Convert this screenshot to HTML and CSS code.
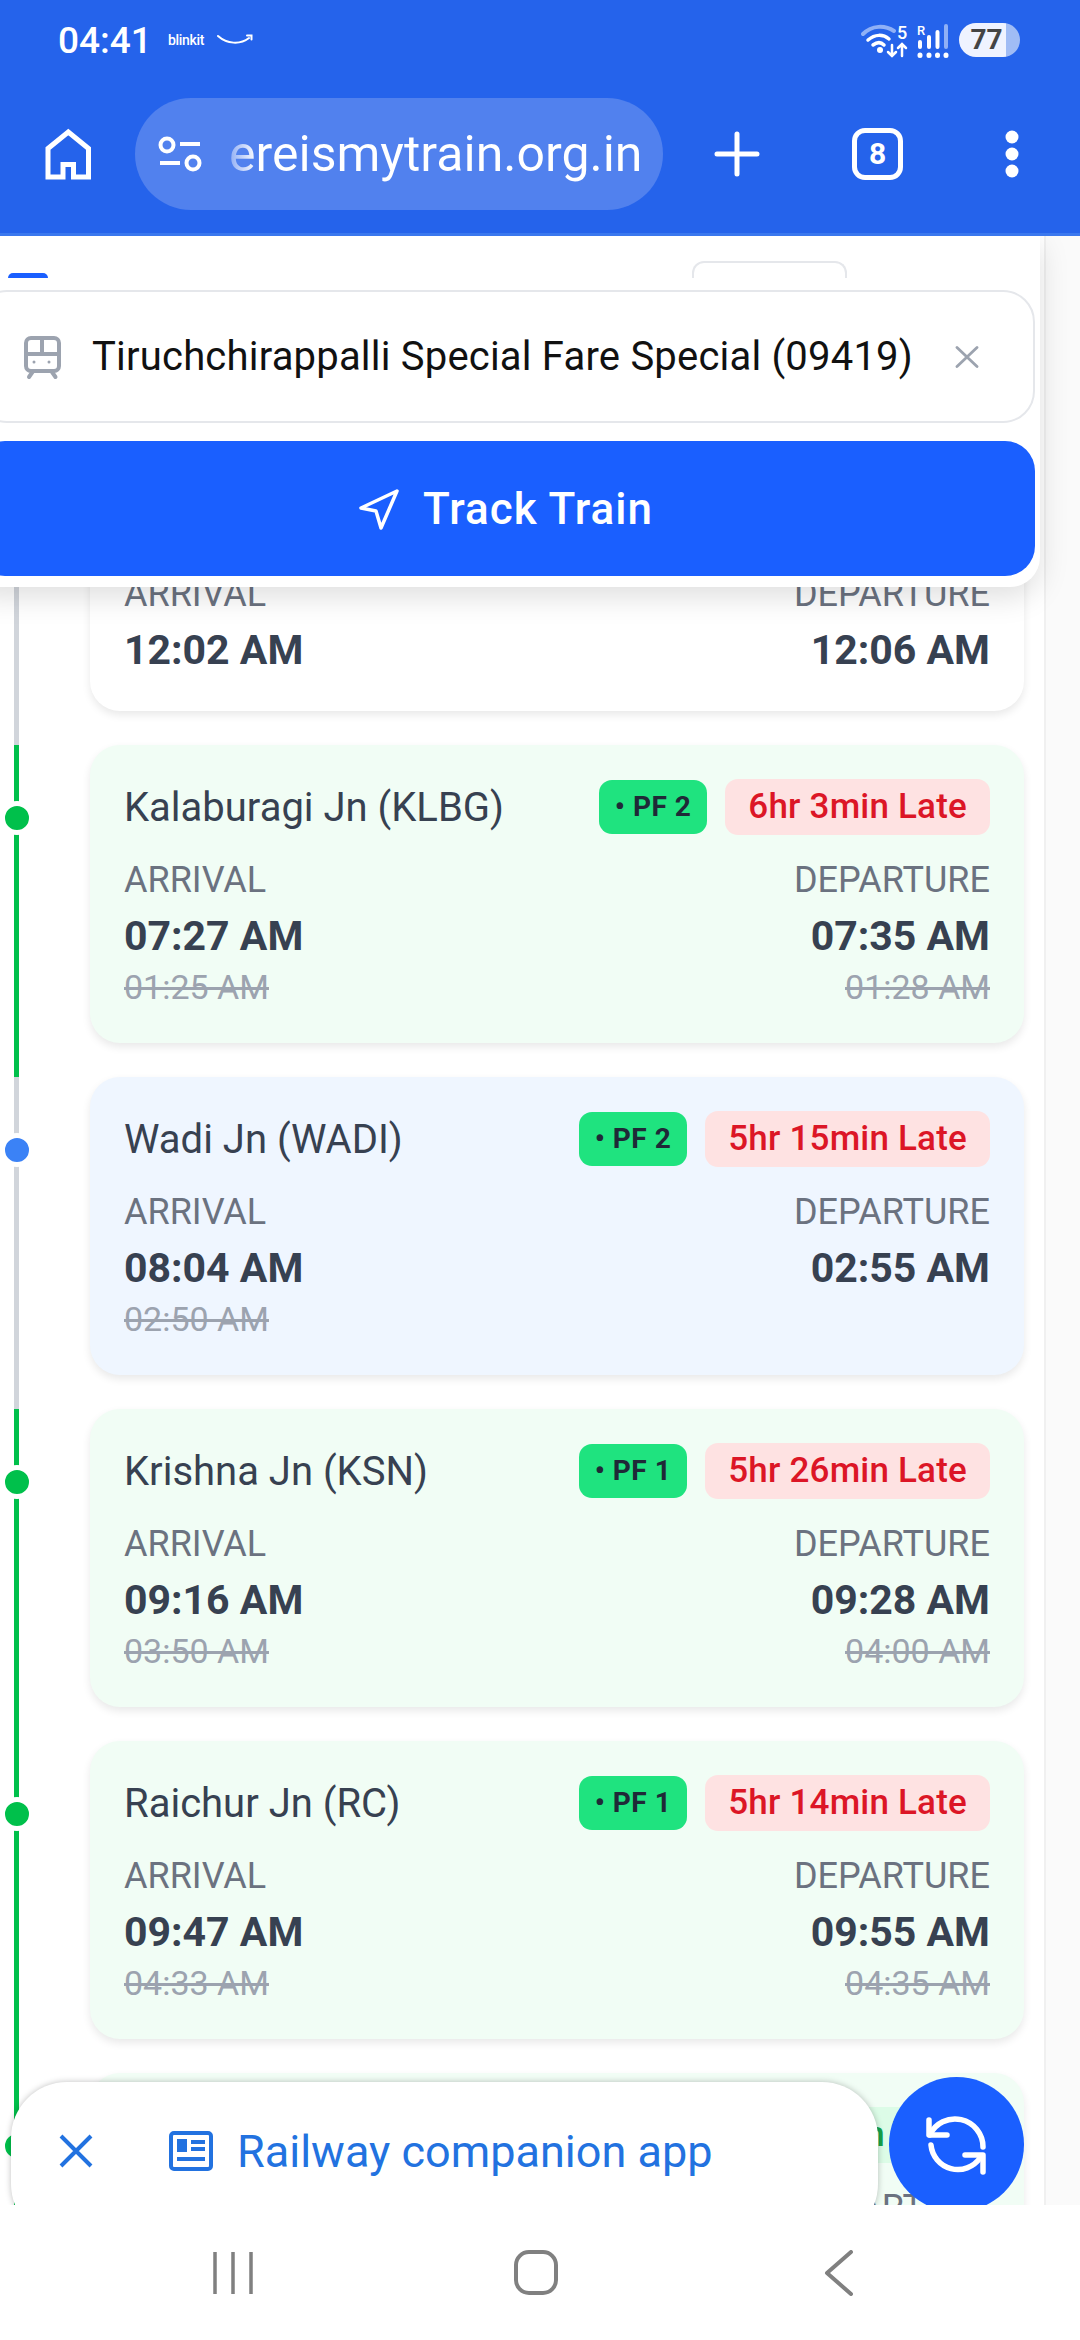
FILE: index.html
```html
<!DOCTYPE html>
<html lang="en">
<head>
    <meta charset="UTF-8">
    <meta name="viewport" content="width=device-width, initial-scale=1.0">
    <title>Train Running Status</title>
    <link rel="stylesheet" href="styles.css">
</head>
<body>

<header class="browser">
    <div class="status-bar">
        <span class="clock">04:41</span>
        <span class="notif-text">blinkit</span>
        <svg class="smile" viewBox="0 0 36 12" fill="none" stroke="#fff" stroke-width="2" stroke-linecap="round"><path d="M1 2c9 8 22 9 31 2"/><path d="M30 1.500h4.500v4"/></svg>
        <svg class="net-icons" viewBox="860 20 92 42" fill="none" stroke="#fff" stroke-linecap="round">
            <path d="M862 35c9-9 22-9 31-3" stroke="#8fb0f6" stroke-width="4"/>
            <path d="M867 41c7-6 15-6 21-1" stroke-width="3.500"/>
            <path d="M872 46c4-3 8-3 11 0" stroke-width="3.500"/>
            <circle cx="879" cy="51" r="3" fill="#fff" stroke="none"/>
            <path d="M891 46v11m-4-4 4 4 4-4M901 57V45m-4 4 4-4 4 4" stroke-width="2.500"/>
            <text class="net-num" x="896" y="40">5</text>
            <text class="net-r" x="916" y="36">R</text>
            <path d="M919 43v5M928 38v10M936.500 33v15" stroke-width="4"/>
            <path d="M945 27v21" stroke="#8fb0f6" stroke-width="4"/>
            <path d="M919 56v.5M928 56v.5M936.500 56v.5M945 56v.5" stroke-width="5"/>
        </svg>
        <span class="battery">77</span>
    </div>
    <div class="toolbar">
        <svg class="home-icon" viewBox="44 126 50 56" fill="none" stroke="#fff" stroke-width="5"><path d="M48 177V148.500L68.300 132 88.500 148.500V177H73.500V164.500H63V177Z"/></svg>
        <div class="url-pill">
            <svg class="tune-icon" viewBox="156 134 48 40" fill="none" stroke="#fff" stroke-width="4"><circle cx="167" cy="145" r="6.500"/><circle cx="193" cy="163" r="6.500"/><path d="M180 144h20M160 163h20"/></svg>
            <span class="url-text">ereismytrain.org.in</span>
        </div>
        <svg class="plus-icon" viewBox="0 0 46 46" fill="none" stroke="#fff" stroke-width="5" stroke-linecap="round"><path d="M23 3v40M3 23h40"/></svg>
        <div class="tab-count">8</div>
        <svg class="menu-icon" viewBox="0 0 14 48" fill="#fff"><circle cx="7" cy="7" r="6.500"/><circle cx="7" cy="24" r="6.500"/><circle cx="7" cy="41" r="6.500"/></svg>
    </div>
</header>

<main class="view">
    <section class="timeline">
        <div class="stop">
            <div class="rail"><div class="line"></div></div>
            <div class="card card-cut">
                <div class="times">
                    <div class="col">
                        <div class="label">ARRIVAL</div>
                        <div class="time">12:02 AM</div>
                    </div>
                    <div class="col col-right">
                        <div class="label">DEPARTURE</div>
                        <div class="time">12:06 AM</div>
                    </div>
                </div>
            </div>
        </div>

        <div class="stop">
            <div class="rail"><div class="line line-green"><span class="dot"></span></div></div>
            <div class="card card-green">
                <div class="card-head">
                    <h3 class="name">Kalaburagi Jn (KLBG)</h3>
                    <span class="pf">• PF 2</span>
                    <span class="late">6hr 3min Late</span>
                </div>
                <div class="times">
                    <div class="col">
                        <div class="label">ARRIVAL</div>
                        <div class="time">07:27 AM</div>
                        <div class="old">01:25 AM</div>
                    </div>
                    <div class="col col-right">
                        <div class="label">DEPARTURE</div>
                        <div class="time">07:35 AM</div>
                        <div class="old">01:28 AM</div>
                    </div>
                </div>
            </div>
        </div>

        <div class="stop">
            <div class="rail"><div class="line"><span class="dot dot-blue"></span></div></div>
            <div class="card card-blue">
                <div class="card-head">
                    <h3 class="name">Wadi Jn (WADI)</h3>
                    <span class="pf">• PF 2</span>
                    <span class="late">5hr 15min Late</span>
                </div>
                <div class="times">
                    <div class="col">
                        <div class="label">ARRIVAL</div>
                        <div class="time">08:04 AM</div>
                        <div class="old">02:50 AM</div>
                    </div>
                    <div class="col col-right">
                        <div class="label">DEPARTURE</div>
                        <div class="time">02:55 AM</div>
                    </div>
                </div>
            </div>
        </div>

        <div class="stop">
            <div class="rail"><div class="line line-green"><span class="dot"></span></div></div>
            <div class="card card-green">
                <div class="card-head">
                    <h3 class="name">Krishna Jn (KSN)</h3>
                    <span class="pf">• PF 1</span>
                    <span class="late">5hr 26min Late</span>
                </div>
                <div class="times">
                    <div class="col">
                        <div class="label">ARRIVAL</div>
                        <div class="time">09:16 AM</div>
                        <div class="old">03:50 AM</div>
                    </div>
                    <div class="col col-right">
                        <div class="label">DEPARTURE</div>
                        <div class="time">09:28 AM</div>
                        <div class="old">04:00 AM</div>
                    </div>
                </div>
            </div>
        </div>

        <div class="stop">
            <div class="rail"><div class="line line-green"><span class="dot"></span></div></div>
            <div class="card card-green">
                <div class="card-head">
                    <h3 class="name">Raichur Jn (RC)</h3>
                    <span class="pf">• PF 1</span>
                    <span class="late">5hr 14min Late</span>
                </div>
                <div class="times">
                    <div class="col">
                        <div class="label">ARRIVAL</div>
                        <div class="time">09:47 AM</div>
                        <div class="old">04:33 AM</div>
                    </div>
                    <div class="col col-right">
                        <div class="label">DEPARTURE</div>
                        <div class="time">09:55 AM</div>
                        <div class="old">04:35 AM</div>
                    </div>
                </div>
            </div>
        </div>

        <div class="stop">
            <div class="rail"><div class="line line-green"><span class="dot"></span></div></div>
            <div class="card card-green">
                <div class="card-head card-head-end">
                    <span class="ontime">On Time</span>
                </div>
                <div class="times">
                    <div class="col">
                        <div class="label">ARRIVAL</div>
                    </div>
                    <div class="col col-right">
                        <div class="label">DEPARTURE</div>
                    </div>
                </div>
            </div>
        </div>
    </section>

    <!-- Search panel stuck to the top of the page -->
    <section class="search-panel">
        <div class="panel-top">
            <span class="tab-mark"></span>
            <span class="date-box"></span>
        </div>
        <div class="train-input">
            <svg class="train-icon" viewBox="20 335 40 46" fill="none" stroke="#9ca3af" stroke-width="4" stroke-linecap="round"><rect x="24" y="339" width="33" height="33" rx="5"/><path d="M40 339v16M24 355h33M30.500 373l-3.500 5M50 373l3.500 5"/><circle cx="32" cy="363" r="1.500" fill="#9ca3af" stroke="none"/><circle cx="47" cy="363" r="1.500" fill="#9ca3af" stroke="none"/></svg>
            <span class="train-name">Tiruchchirappalli Special Fare Special (09419)</span>
            <svg class="clear-icon" viewBox="0 0 24 22" fill="none" stroke="#9ca3af" stroke-width="2.800" stroke-linecap="round"><path d="M2 1.500l20 19M22 1.500l-20 19"/></svg>
        </div>
        <button class="track-btn">
            <svg class="send-icon" viewBox="18 15 44 44" fill="none" stroke="#fff" stroke-width="3.500" stroke-linejoin="round"><path d="M58 19 22 36 37 39 42 56Z"/></svg>
            Track Train
        </button>
    </section>

    <div class="promo">
        <svg class="promo-close" viewBox="0 0 34 34" fill="none" stroke="#2272e0" stroke-width="4"><path d="M2 2l30 30M32 2 2 32"/></svg>
        <svg class="promo-icon" viewBox="0 0 44 40" fill="none"><rect x="2" y="2" width="40" height="36" rx="3" stroke="#2272e0" stroke-width="4"/><path d="M8 8h10v13H8zM22 9h14v4H22zM22 16h14v4H22zM8 26h28v4H8z" fill="#2272e0"/></svg>
        <span class="promo-text">Railway companion app</span>
    </div>

    <button class="refresh-btn">
        <svg class="refresh-icon" viewBox="81 48 72 72" fill="none" stroke="#fff" stroke-width="5.500" stroke-linecap="round" stroke-linejoin="round"><path d="M89 59V74H107"/><path d="M89.700 74A28 28 0 0 1 143 86"/><path d="M91 84A27 27 0 0 0 140 97"/><path d="M125 94H143V111"/></svg>
    </button>
</main>

<nav class="sys-nav">
    <svg class="nav-bars" viewBox="0 0 42 44" fill="none" stroke="#808080" stroke-width="3.500"><path d="M3 1v42M21 1v42M39 1v42"/></svg>
    <span class="nav-home"></span>
    <svg class="nav-back" viewBox="0 0 30 46" fill="none" stroke="#808080" stroke-width="4" stroke-linecap="round" stroke-linejoin="round"><path d="M27 2 3 23 27 44"/></svg>
</nav>

</body>
</html>
```

FILE: styles.css
```css
/* Reset */
* {
    margin: 0;
    padding: 0;
    box-sizing: border-box;
}

body {
    width: 1080px;
    height: 2340px;
    overflow: hidden;
    display: flex;
    flex-direction: column;
    font-family: Roboto, "Noto Sans", sans-serif;
    background: #fff;
    color: #374151;
}

/* Browser chrome */
.browser {
    height: 236px;
    flex-shrink: 0;
    background: #2563eb;
    border-bottom: 3px solid #3b78ee;
    color: #fff;
}

.status-bar {
    height: 80px;
    display: flex;
    align-items: center;
    padding-left: 58px;
}

.clock {
    font-size: 37px;
    font-weight: 500;
    width: 110px;
}

.notif-text {
    font-size: 14px;
    font-weight: 500;
    letter-spacing: -0.3px;
    width: 49px;
}

.smile {
    width: 36px;
    height: 12px;
}

.net-icons {
    width: 92px;
    height: 42px;
    margin-left: 608px;
}

.net-num,
.net-r {
    fill: #fff;
    stroke: none;
    font-family: Roboto, sans-serif;
    font-weight: 500;
}

.net-num {
    font-size: 18px;
}

.net-r {
    font-size: 13px;
}

.battery {
    width: 61px;
    height: 34px;
    margin-left: 6px;
    border-radius: 17px;
    background: linear-gradient(to right, #eff3ff 77%, #a0bcf5 77%);
    color: #444;
    font-size: 28px;
    font-weight: 700;
    line-height: 34px;
    text-align: center;
    padding-right: 6px;
}

.toolbar {
    display: flex;
    align-items: center;
    padding: 18px 0 0 44px;
}

.home-icon {
    width: 50px;
    height: 56px;
    margin-right: 41px;
}

.url-pill {
    width: 528px;
    height: 112px;
    border-radius: 56px;
    background: #5181ee;
    display: flex;
    align-items: center;
    padding-left: 21px;
    overflow: hidden;
}

.tune-icon {
    width: 48px;
    height: 40px;
    margin-right: 25px;
}

.url-text {
    font-size: 50px;
    white-space: nowrap;
    background: linear-gradient(to right, #8fadf4 0, #fff 28px);
    -webkit-background-clip: text;
    background-clip: text;
    color: transparent;
}

.plus-icon {
    width: 46px;
    height: 46px;
    margin-left: 51px;
}

.tab-count {
    width: 51px;
    height: 52px;
    margin-left: 92px;
    border: 5px solid #fff;
    border-radius: 13px;
    font-size: 30px;
    font-weight: 700;
    line-height: 42px;
    text-align: center;
}

.menu-icon {
    width: 14px;
    height: 48px;
    margin-left: 102px;
}

/* Page under the toolbar */
.view {
    flex: 1;
    position: relative;
    overflow: hidden;
    background: #fafafa;
}

.timeline {
    width: 1046px;
    min-height: 100%;
    padding-top: 223px;
    background: #fff;
    border-right: 2px solid #f0f0f0;
}

.stop {
    display: flex;
}

.rail {
    width: 90px;
    flex-shrink: 0;
    padding-left: 14px;
}

.line {
    position: relative;
    width: 5px;
    height: 100%;
    background: #d1d5db;
}

.line-green {
    background: #00c04b;
}

.dot {
    position: absolute;
    top: 56px;
    left: -14px;
    width: 34px;
    height: 34px;
    border-radius: 50%;
    border: 5px solid #fff;
    background: #00c04b;
}

.dot-blue {
    background: #3b82f6;
}

/* Station cards */
.card {
    width: 934px;
    height: 298px;
    margin-bottom: 34px;
    padding: 34px 34px 0;
    border-radius: 30px;
    background: #fff;
    box-shadow: 0 4px 8px rgba(0, 0, 0, 0.09);
}

.card-cut {
    height: 252px;
    padding-top: 113px;
}

.card-green {
    background: #f1fdf5;
}

.card-blue {
    background: #eff6ff;
}

.card-head {
    height: 56px;
    display: flex;
    align-items: center;
    gap: 18px;
    margin-bottom: 23px;
}

.card-head-end {
    justify-content: flex-end;
}

.name {
    flex: 1;
    font-size: 40px;
    font-weight: 400;
    color: #374151;
    white-space: nowrap;
}

.pf {
    height: 54px;
    padding: 0 16px;
    border-radius: 13px;
    background: #1fe37f;
    color: #1f2937;
    font-size: 28px;
    font-weight: 700;
    letter-spacing: 0.5px;
    line-height: 54px;
    white-space: nowrap;
}

.late {
    height: 56px;
    padding: 0 23px;
    border-radius: 13px;
    background: #fee2e2;
    color: #dc1626;
    font-size: 35px;
    font-weight: 500;
    letter-spacing: 0.2px;
    line-height: 56px;
    white-space: nowrap;
}

.ontime {
    height: 56px;
    padding: 0 18px 0 34px;
    background: #dcfce7;
    color: #16a34a;
    font-size: 35px;
    font-weight: 500;
    line-height: 56px;
}

.times {
    display: flex;
    justify-content: space-between;
}

.col-right {
    text-align: right;
}

.label {
    font-size: 36px;
    line-height: 44px;
    color: #6b7280;
}

.time {
    margin-top: 8px;
    font-size: 41px;
    font-weight: 700;
    line-height: 52px;
    color: #374151;
}

.old {
    margin-top: 5px;
    font-size: 34px;
    line-height: 40px;
    color: #9ca3af;
    text-decoration: line-through;
}

/* Search panel */
.search-panel {
    position: absolute;
    top: 0;
    left: -35px;
    width: 1075px;
    padding: 0 5px 11px 10px;
    background: #fff;
    border-radius: 0 0 30px 30px;
    box-shadow: 0 10px 30px rgba(0, 0, 0, 0.13);
}

.panel-top {
    height: 42px;
    margin-bottom: 12px;
    overflow: hidden;
    display: flex;
    align-items: flex-end;
    padding-left: 33px;
}

.tab-mark {
    width: 40px;
    height: 5px;
    background: #1a5fff;
    border-radius: 8px 8px 0 0;
}

.date-box {
    width: 155px;
    height: 17px;
    margin-left: 644px;
    border: 2px solid #e5e7eb;
    border-bottom: none;
    border-radius: 12px 12px 0 0;
}

.train-input {
    height: 133px;
    display: flex;
    align-items: center;
    padding-left: 45px;
    border: 2px solid #e5e7eb;
    border-radius: 32px;
}

.train-icon {
    width: 40px;
    height: 46px;
    margin-right: 30px;
}

.train-name {
    flex: 1;
    font-size: 40px;
    letter-spacing: 0.2px;
    color: #111;
    white-space: nowrap;
}

.clear-icon {
    width: 24px;
    height: 22px;
    margin-right: 54px;
}

.track-btn {
    width: 100%;
    height: 135px;
    margin-top: 18px;
    display: flex;
    align-items: center;
    justify-content: center;
    gap: 22px;
    border: none;
    border-radius: 30px;
    background: #1a5fff;
    color: #fff;
    font-family: inherit;
    font-size: 44px;
    font-weight: 500;
    letter-spacing: 1px;
}

.send-icon {
    width: 44px;
    height: 44px;
}

/* Bottom floats */
.promo {
    position: absolute;
    top: 1846px;
    left: 11px;
    width: 867px;
    height: 158px;
    display: flex;
    align-items: center;
    padding: 0 0 20px 48px;
    border-radius: 56px;
    background: #fff;
    box-shadow: 0 0 6px rgba(0, 0, 0, 0.25);
}

.promo-close {
    width: 34px;
    height: 34px;
    margin-right: 76px;
}

.promo-icon {
    width: 44px;
    height: 40px;
    margin-right: 24px;
}

.promo-text {
    font-size: 45px;
    color: #2272e0;
    white-space: nowrap;
}

.refresh-btn {
    position: absolute;
    top: 1841px;
    left: 889px;
    width: 135px;
    height: 135px;
    display: flex;
    align-items: center;
    justify-content: center;
    border: none;
    border-radius: 50%;
    background: #1a5fff;
}

.refresh-icon {
    width: 72px;
    height: 72px;
}

/* Android navigation bar */
.sys-nav {
    height: 135px;
    flex-shrink: 0;
    display: grid;
    grid-template-columns: repeat(3, 303px);
    justify-items: center;
    align-items: center;
    padding-left: 81px;
    background: #fff;
}

.nav-bars {
    width: 42px;
    height: 44px;
}

.nav-home {
    width: 44px;
    height: 45px;
    border: 4px solid #808080;
    border-radius: 15px;
}

.nav-back {
    width: 30px;
    height: 46px;
}
```
